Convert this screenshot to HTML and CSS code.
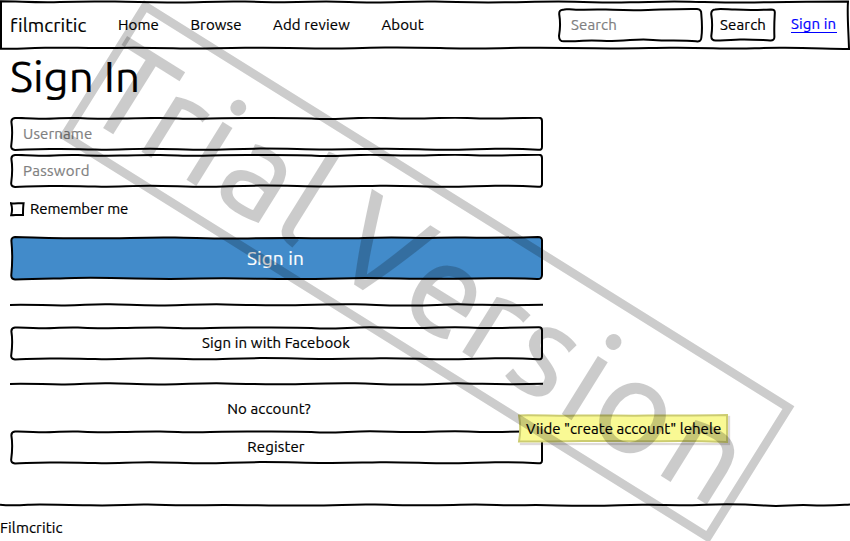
FILE: index.html
```html
<!DOCTYPE html>
<html lang="en">
<head>
<meta charset="utf-8">
<title>filmcritic</title>
<link rel="stylesheet" href="styles.css">
</head>
<body>
<svg class="defs" width="0" height="0">
  <symbol id="field" viewBox="0 0 533 34">
    <path d="M5 1 C12 .5 18 1.8 30 1.7 S55 .8 68 1.1 S90 2.1 110 1.6 S135 .9 150 1 S175 2 188 1.8 S225 1 240 1.1 S285 .8 305 1.7 S340 .8 360 .8 S385 1.7 400 1.6 S430 .8 445 .8 S475 1.9 492 1.5 S515 1 529 .8 Q532 .8 532 4 V30 Q532 33.3 528 32.8 C510 31.8 500 31.6 485 31.7 S450 33 430 32.7 S390 31.4 370 31.7 S340 32.7 315 32.5 S275 31.5 250 31.6 S215 32.8 195 32.8 S160 31.7 140 31.7 S105 33 85 32.6 S60 31.6 40 32 S15 32.7 5 32.9 Q.8 32.5 1.2 29 C2.4 20 2.8 14 1.4 5 Q1.2 1.5 5 1Z"/>
  </symbol>
  <symbol id="rule" viewBox="0 0 533 4">
    <path d="M0 1.9 C25 1.4 35 2.6 55 2.4 S80 1 100 1.3 S130 2.7 155 2.4 S190 1 215 1.4 S255 2.8 280 2.2 S320 1 345 1.3 S370 2.8 405 2.4 S430 1 455 1.4 S490 2.8 533 1.8"/>
  </symbol>
</svg>

<header class="bar">
  <svg class="sketch" viewBox="0 0 850 50"><path d="M1 1.2 C20 1.2 35 2.8 60 2 S90 1.4 115 1.6 S150 2.9 180 2.4 S220 1.2 245 1.6 S280 2.8 310 1.8 S350 2.6 375 2.4 S410 1.2 435 1.5 S470 2.9 505 2.3 S550 1.2 575 1.7 S600 2.9 630 2.3 S665 1.2 690 1.7 S735 3 765 2.3 S800 1.4 848 1.4 C847 15 848.5 30 849 49 C830 49 815 48 785 47.8 S755 48.8 735 48.6 S695 47.4 670 47.7 S620 48.8 595 48.3 S545 47.4 520 47.8 S485 48.9 460 48.5 S420 47.3 385 47.6 S350 49 315 48.5 S280 47.3 245 47.8 S205 48.9 185 48.5 S145 47.3 115 47.9 S70 47.2 45 47.8 S15 48.8 1 48.8Z"/></svg>
  <div class="brand">filmcritic</div>
  <nav class="nav">
    <a>Home</a><a>Browse</a><a>Add review</a><a>About</a>
  </nav>
  <form class="search">
    <div class="box search-box">
      <svg class="sketch" viewBox="0 0 145 35"><path d="M5 1.8 C8 .2 11 1.8 18 1.8 S35 1.2 48 1.6 S70 2.6 90 2 S120 .8 139 1 Q143.5 1.3 143.3 6 C144.2 16 144.2 24 143.3 30 Q143 34 138 33.3 C125 31.8 110 33 95 31.9 S75 32.2 60 32.8 S40 31.8 25 32.7 S10 33 6 33.3 Q1 33.5 1 28 C2.6 19 2.2 12 1.2 6 Q1 2 5 1.8Z"/></svg>
      <input type="text" placeholder="Search">
    </div>
    <button type="button" class="box search-btn">
      <svg class="sketch" viewBox="0 0 66 34"><path d="M5 1.4 C9 .5 15 1.2 25 1.6 S48 2.1 61 1.4 Q65.2 1.4 64.8 5 C64.2 15 64.2 24 64.4 29 Q64.4 32.8 60 32.4 C50 32 40 31.3 30 31.6 S16 32.8 6 32.4 Q1.2 32.6 1.3 28 C2.6 19 2.6 14 1.2 6 Q1.2 1.8 5 1.4Z"/></svg>
      <span>Search</span>
    </button>
    <a class="signin-link" href="#">Sign in</a>
  </form>
</header>

<main class="content">
  <h1>Sign In</h1>
  <div class="box field"><svg class="sketch"><use href="#field"/></svg><input type="text" placeholder="Username"></div>
  <div class="box field"><svg class="sketch"><use href="#field"/></svg><input class="password" type="text" placeholder="Password"></div>
  <label class="remember">
    <svg width="15" height="15" viewBox="0 0 15 15"><path d="M1 1.3 C5 2 9 1 13.6 1.2 C13 5 13 10 13 13 C9 12.6 5 13.2 1.2 13.2 C2.4 9 2.3 5 1 1.3Z"/></svg>
    <span>Remember me</span>
  </label>
  <button type="button" class="box primary">
    <svg class="sketch" viewBox="0 0 533 45"><path d="M5 1 C20 1 30 2.4 55 2.3 S105 2.4 120 2 S145 1.4 165 1.6 S205 3 230 2.5 S265 2 285 1.9 S320 2.8 345 2.2 S375 1.3 400 1.8 S430 1.2 455 1.6 S495 2 528 1 Q532.3 1 532 5 V39 Q532 43.5 527 43 C510 42 490 42.4 465 42.4 S415 43.3 390 42.6 S355 41.8 330 42.4 S285 43.3 255 42.8 S215 42 190 42.6 S145 43 125 42.5 S85 41.6 65 42 S30 43.2 5 43.4 Q1 43.3 1.3 39 C2.6 26 2.6 17 1.4 5 Q1.2 1.4 5 1Z"/></svg>
    <span>Sign in</span>
  </button>
  <svg class="rule rule-a"><use href="#rule"/></svg>
  <button type="button" class="box wide"><svg class="sketch"><use href="#field"/></svg><span>Sign in with Facebook</span></button>
  <svg class="rule rule-b"><use href="#rule"/></svg>
  <p class="ask">No account?</p>
  <button type="button" class="box wide"><svg class="sketch"><use href="#field"/></svg><span>Register</span></button>
</main>

<footer class="footer">
  <svg class="foot-rule" viewBox="0 0 850 4"><path d="M0 1.7 C10 2.8 18 2.4 28 1.7 S60 1.6 90 2.3 S125 1.3 148 1.6 S170 2.8 205 2.2 S265 2.8 305 2.6 S345 1.2 375 1.6 S430 2.8 460 1.8 S500 2.8 525 2.2 S560 3 590 2.8 S625 1.4 650 1.8 S680 2.8 705 1.7 S745 1.2 765 2.6 S790 1.4 810 2.2 S835 2.4 850 1.5"/></svg>
  <span>Filmcritic</span>
</footer>

<aside class="note">
  <svg class="sketch" viewBox="0 0 210 29"><path d="M1 1.4 C20 1 40 2 60 1.6 S110 2 130 1.6 S175 1.8 209 1 V28 C185 27 165 26.6 140 27.2 S90 26.5 65 27 S25 27.6 1 27.6 C2.4 20 2.6 10 1 1.4Z"/></svg>
  <span>Viide "create account" lehele</span>
</aside>

<svg class="watermark" viewBox="0 0 850 541">
  <g transform="translate(145.3 6.3) rotate(31.96)">
    <rect width="758" height="152.5"/>
    <text y="124.5" x="-1 64 117 154 223 255 289 373 442 497 559.5 594 676">Trial Version</text>
  </g>
</svg>
</body>
</html>
```
FILE: styles.css
```css
* { box-sizing: border-box; }
body {
  margin: 0;
  height: 541px;
  overflow: hidden;
  position: relative;
  background: #fff;
  color: #000;
  font: 15px/20px Ubuntu, "Noto Sans", sans-serif;
  letter-spacing: .14px;
  -webkit-text-stroke: .2px;
}
.defs { position: absolute; }
svg path { stroke: #000; stroke-width: 2; fill: none; }
.box { position: relative; display: flex; align-items: center; justify-content: center; border: 0; padding: 0; background: none; font: inherit; color: inherit; letter-spacing: inherit; }
.box span, .box input, .note span { position: relative; white-space: nowrap; }
.sketch { position: absolute; left: 0; top: 0; width: 100%; height: 100%; overflow: visible; }
input { width: 100%; border: 0; outline: 0; padding: 0 13px; background: none; font: inherit; letter-spacing: inherit; }
input::placeholder { color: #808080; opacity: 1; }
.password { letter-spacing: .3px; }

.bar { position: relative; display: flex; align-items: center; height: 50px; padding: 0 13px 0 10px; }
.brand { width: 108px; font-size: 19px; letter-spacing: .08px; }
.nav { display: flex; gap: 31.4px; position: relative; }
.search { display: flex; align-items: center; margin-left: auto; }
.search-box { width: 145px; height: 35px; }
.search-btn { width: 66px; height: 34px; margin: 0 15px 0 7px; }
.signin-link { color: #00f; text-decoration: none; border-bottom: 1px solid #00f; line-height: 17px; width: 46px; margin-top: -2px; }

.content { width: 533px; margin-left: 10px; display: flex; flex-direction: column; }
h1 { margin: 0; height: 67px; font-size: 43.8px; line-height: 51px; font-weight: 400; letter-spacing: 0; }
.field { height: 34px; margin-bottom: 3px; }
.remember { display: flex; align-items: center; gap: 5px; height: 20px; margin-top: 8px; letter-spacing: -.08px; }
.primary { height: 45px; margin-top: 17px; padding: 0 2px 2px 0; color: #fff; font-size: 19px; }
.primary path { fill: #428bca; }
.rule { width: 533px; height: 4px; }
.rule-a { margin: 22px 0 19px; }
.wide { height: 35px; padding: 0 1px 2px 0; }
.rule-b { margin: 21px 0 13px; }
.ask { margin: 0; height: 31px; padding-right: 15px; text-align: center; }

.footer { margin-top: 38px; display: flex; flex-direction: column; gap: 11px; }
.foot-rule { width: 850px; height: 4px; }

.note { position: absolute; left: 518px; top: 414px; width: 210px; height: 29px; padding: 5px 8px; letter-spacing: .04px; box-shadow: 2px 2px 1px rgba(90, 70, 70, .2); }
.note path { fill: #f9f994; stroke: #cccc70; }

.watermark { position: absolute; left: 0; top: 0; width: 850px; height: 541px; pointer-events: none; }
.watermark rect { fill: none; stroke: rgba(0, 0, 0, .2); stroke-width: 8.7; }
.watermark text { fill: #000; stroke: #000; stroke-width: 2px; opacity: .2; font-size: 128px; letter-spacing: 0; -webkit-text-stroke: 2px; }
```
